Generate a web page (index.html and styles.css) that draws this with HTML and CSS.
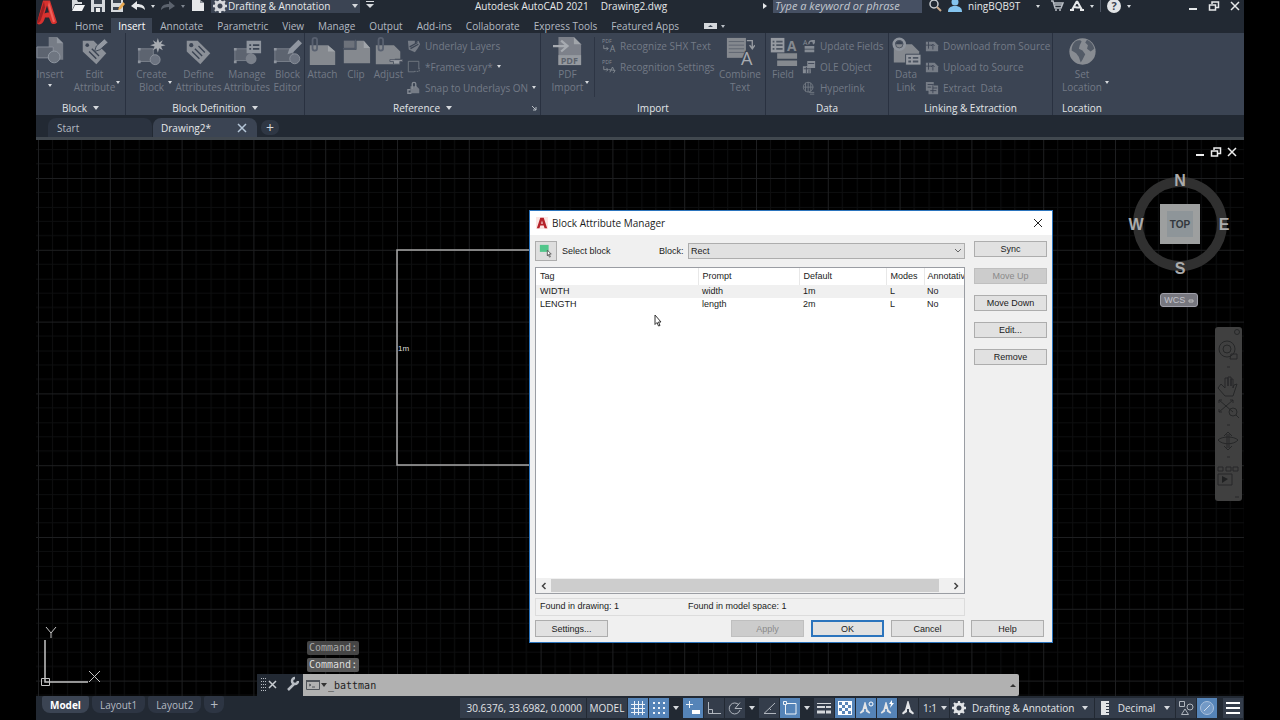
FILE: index.html
```html
<!DOCTYPE html>
<html lang="en">
<head>
<meta charset="utf-8">
<title>Autodesk AutoCAD 2021 - Drawing2.dwg</title>
<link rel="stylesheet" href="styles.css">
</head>
<body>
<svg class="sprites" aria-hidden="true">
  <symbol id="gear" viewBox="0 0 16 16"><path fill="none" stroke="currentColor" stroke-width="3.4" d="M8 3.4a4.6 4.6 0 1 1-.01 0z"/><path stroke="currentColor" stroke-width="2.6" d="M8 0v3M8 13v3M0 8h3M13 8h3M2.3 2.3l2.2 2.2M11.5 11.5l2.2 2.2M2.3 13.7l2.2-2.2M11.5 4.500l2.200-2.200"/></symbol>
  <symbol id="logo" viewBox="0 0 20 24"><path fill="#d8322f" d="M6 0h7l7 22c-2 2-5 2-6 0l-2-5H8c-1 4-3 7-6 7-1 0-2-1-2-2z"/><path fill="#222933" d="M10 5l2 7c-2 0-3 0-4.500 1z"/><path fill="#a01f22" d="M0 22L7 1l1 6-4 12c-1 3-3 4-4 3z"/><path fill="#f0605a" d="M12 1l6 20-2 1-5-17z"/></symbol>
  <symbol id="insert" viewBox="0 0 32 32"><path fill="#767c86" d="M14 0h9l7 7v18H14z"/><path fill="#9298a1" d="M23 0v7h7z"/><path fill="#5d6470" stroke="#8b919b" d="M1 11h18v12H1z"/><circle cx="20" cy="22" r="6.500" fill="#6f7681" stroke="#939aa4"/></symbol>
  <symbol id="tagedit" viewBox="0 0 32 32"><path fill="#8b9098" d="M3 4h12l14 14-11 12L3 16z"/><circle cx="8" cy="9" r="2" fill="#3b4453"/><path stroke="#3b4453" stroke-width="1.500" d="M10 16l8 8M13 13l8 8"/><path fill="#9298a1" stroke="#3b4453" d="M16 16l2-6 9-8 4 4-9 8z"/></symbol>
  <symbol id="tag" viewBox="0 0 32 32"><path fill="#8b9098" d="M3 4h12l14 14-11 12L3 16z"/><circle cx="8" cy="9" r="2.300" fill="#3b4453"/><path stroke="#3b4453" stroke-width="1.500" d="M9 16l8 8M12 13l8 8M16 10l7 7"/></symbol>
  <symbol id="create" viewBox="0 0 32 32"><path fill="#5d6470" stroke="#7d838d" d="M2 13h16v14H2z"/><path fill="#9096a0" d="M1 12h3v3H1zM1 26h3v3H1zM17 26h3v3h-3z"/><circle cx="20" cy="25" r="5.500" fill="#6c7380" stroke="#8c929c"/><path fill="#a7abb1" d="M23 1l1.500 5 4-2.500-2 4 5 1.500-5 1.500 2 4-4-2-1.500 5-1.500-5-4 2 2-4-5-1.500 5-1.500-2-4 4 2.500z"/></symbol>
  <symbol id="manage" viewBox="0 0 32 32"><path fill="#5d6470" stroke="#7d838d" d="M2 13h18v13H2z"/><circle cx="20" cy="24" r="6" fill="#7b818b"/><path fill="#8f959e" d="M1 12h3v3H1zM1 26h3v3H1zM15 4h16v14H15z"/><path stroke="#3b4453" stroke-width="2" d="M18 9h2M18 13h2M22 9h7M22 13h7"/></symbol>
  <symbol id="editor" viewBox="0 0 32 32"><path fill="#5d6470" stroke="#7d838d" d="M2 13h20v14H2z"/><circle cx="24" cy="24" r="5.500" fill="#6c7380" stroke="#8c929c"/><path fill="#9096a0" d="M1 12h3v3H1zM1 26h3v3H1zM16 19l2-6L28 3l4 4-10 10z"/></symbol>
  <symbol id="attach" viewBox="0 0 32 32"><path fill="#85898f" d="M2 9h20l8 7v15H2z"/><path fill="#a1a5aa" d="M22 9v7h8z"/><rect x="5" y="1" width="5" height="14" rx="2.500" fill="none" stroke="#596170" stroke-width="2"/></symbol>
  <symbol id="clip" viewBox="0 0 32 32"><path fill="#85898f" d="M2 14h14V4h8l7 8v17H2z"/><path fill="#6d727b" d="M2 4h12v8H2z"/><path fill="none" stroke="#596170" d="M1 13h14V3"/><path fill="#a1a5aa" d="M24 4v8h7z"/></symbol>
  <symbol id="adjust" viewBox="0 0 32 32"><path fill="#85898f" d="M2 9h20l7 7v8h-6v6H2z"/><rect x="5" y="1" width="5" height="14" rx="2.500" fill="none" stroke="#596170" stroke-width="2"/><path fill="#9a9ea5" stroke="#4d5562" d="M17.500 25h14v2h-3v3h-7v-3h-4z"/></symbol>
  <symbol id="datalink" viewBox="0 0 32 32"><path fill="#85898f" d="M2 8h20l8 8v12H2z"/><circle cx="8" cy="8" r="6" fill="none" stroke="#8f959e" stroke-width="3"/><circle cx="8" cy="8" r="4" fill="none" stroke="#4d5562"/><path fill="#969aa1" stroke="#3b4453" d="M15 19h17v12H15z"/><path stroke="#4d5562" stroke-width="2" d="M18 23h3M18 27h3M23 23h6M23 27h6"/></symbol>
  <symbol id="globe" viewBox="0 0 32 32"><circle cx="16" cy="16" r="14.500" fill="#888c92"/><path fill="#535b67" d="M8 5c3-2 6-2 7 0l-2 4-1 4 4 2 3 4-3 6-2 3-2-6-3-4-5-3c0-4 1-7 4-10zM21 3c4 2 7 5 8 10l-4 3-4-3 1-4-3-3z"/></symbol>
  <symbol id="layers" viewBox="0 0 16 16"><path fill="#767c86" d="M1 2h8v3l4-3 2 4-3 5-3 4-7-3z"/><path stroke="#3b4453" stroke-width="1.500" d="M3 9l9-5M4 11l9-5"/></symbol>
  <symbol id="frame" viewBox="0 0 16 16"><path fill="none" stroke="#747a84" d="M1.500 1.500h12v9M1.500 1.500v12h7"/><path fill="none" stroke="#747a84" stroke-dasharray="2 1" d="M8 13h6v-4"/></symbol>
  <symbol id="snapu" viewBox="0 0 16 16"><path fill="#767c86" d="M4 6h7l3 3v5H4z"/><path fill="none" stroke="#858b94" stroke-width="1.500" d="M6 9V3c0-2 4-2 4 0v4M4 10H1v4h4"/></symbol>
  <symbol id="ole" viewBox="0 0 16 16"><path fill="#858b94" d="M6 1h9v8H6zM1 7h9v8H1z"/><path stroke="#3b4453" d="M7 4h7M2 10h8M5 8v7M8 11v4"/></symbol>
  <symbol id="link" viewBox="0 0 16 16"><circle cx="7" cy="7" r="5.500" fill="none" stroke="#747a84"/><path fill="none" stroke="#747a84" d="M2 7h11M7 1v12M4 2v10M10 2v10M8 13h6M9 15h5"/></symbol>
  <symbol id="sheet" viewBox="0 0 16 16"><path fill="#767c86" d="M1 3h10l4 4v7H1z"/><path fill="none" stroke="#3b4453" d="M4 3v8M1 7h7M9 12V6M7 8l2-2 2 2"/></symbol>
  <symbol id="extract" viewBox="0 0 16 16"><path fill="#767c86" d="M1 1h9v4h5v10H4v-4H1z"/><path stroke="#3b4453" d="M3 4h7M3 7h4M9 8h5M6 11h7M9 5v9"/></symbol>
  <symbol id="cross" viewBox="0 0 12 12"><path fill="none" stroke="currentColor" stroke-width="1.500" d="M2 2l8 8M10 2l-8 8"/></symbol>
  <symbol id="restore" viewBox="0 0 12 12"><path fill="none" stroke="currentColor" stroke-width="1.500" d="M1.500 5h6v5h-6zM4 4V2h6.500v5.500H8"/></symbol>
  <symbol id="minus" viewBox="0 0 12 12"><path stroke="currentColor" stroke-width="2" d="M2 9h8"/></symbol>
  <symbol id="acursor" viewBox="0 0 16 16"><path fill="currentColor" d="M7.500 1h1l2.500 9 3 3-1 1.500-4-2.500V9H7v3l-4 2.500L2 13l3-3z"/></symbol>
</svg>

<div class="app">
  <header class="header">
    <svg class="logo" role="img" aria-label="AutoCAD"><use href="#logo"/></svg>
    <div class="titlebar">
      <div class="quick">
        <button class="qa" aria-label="Open"><svg viewBox="0 0 14 12"><path fill="#d5d8dc" d="M1 0h5l1 2h4v2H4L1 10z"/><path fill="#f2f3f5" d="M4 5h10l-3 6H1z"/></svg></button>
        <button class="qa" aria-label="Save"><svg viewBox="0 0 14 12"><path fill="#d5d8dc" d="M0 0h14v12H0z"/><path fill="#3a424e" d="M3 0h8v4H3zM3 7h8v5H3z"/><path fill="#eee" d="M5 8h4v4H5z"/></svg></button>
        <button class="qa" aria-label="Save As"><svg viewBox="0 0 14 12"><path fill="#d5d8dc" d="M0 0h12v12H0z"/><path fill="#3a424e" d="M2 0h8v3H2zM2 7h6v3H2z"/><path fill="#e8a850" d="M7 10l1-3 4-5 2 2-4 5z"/></svg></button>
        <button class="qa" aria-label="Undo"><svg viewBox="0 0 14 12"><path fill="#e6e8ea" d="M0 6l6-5v3c5 0 8 2 8 6-2-2-4-3-8-3v3z"/></svg></button>
        <i class="tri"></i>
        <button class="qa" aria-label="Redo"><svg viewBox="0 0 14 12"><path fill="#5b626d" d="M14 6L8 1v3c-5 0-8 2-8 6 2-2 4-3 8-3v3z"/></svg></button>
        <i class="tri dim"></i>
        <button class="qa" aria-label="New"><svg viewBox="0 0 14 12"><path fill="#e6e8ea" d="M1 0h8l4 3v8H1z"/><path fill="#8b9098" d="M9 0v3h4z"/></svg></button>
        <label class="workspace"><svg><use href="#gear"/></svg><select aria-label="Workspace"><option>Drafting &amp; Annotation</option></select><i class="tri wide"></i></label>
        <i class="tri bar"></i>
      </div>
      <div class="doctitle"><span>Autodesk AutoCAD 2021</span><span>Drawing2.dwg</span></div>
      <div class="account">
        <i class="tri side"></i>
        <input class="search" type="text" placeholder="Type a keyword or phrase" aria-label="Search">
        <svg class="ic14" viewBox="0 0 14 12"><circle cx="6" cy="4" r="4" fill="none" stroke="#c9cdd2" stroke-width="1.500"/><path stroke="#c9a98a" stroke-width="2" d="M9 7l4 4"/></svg>
        <svg class="ic14 user" viewBox="0 0 14 12"><circle cx="7" cy="2" r="3.500" fill="#84c4ef"/><path fill="#84c4ef" d="M0 12c0-4 2-5 5-6h4c3 1 5 2 5 6z"/></svg>
        <span class="username">ningBQB9T</span>
        <i class="tri"></i>
        <svg class="ic14 cart" viewBox="0 0 14 12"><path fill="none" stroke="#b8bdc4" stroke-width="1.500" d="M1 1h2l2 7h6l2-5H4M5 5h7"/><circle cx="6" cy="10" r="1" fill="#b8bdc4"/><circle cx="10" cy="10" r="1" fill="#b8bdc4"/></svg>
        <svg class="ic14" viewBox="0 0 14 12"><path fill="none" stroke="#e6e8ea" stroke-width="2" d="M7 1L2 10M7 1l5 9M4 7c2 0 4 1 6 0M0 10h4M10 10h4"/></svg>
        <i class="tri"></i>
        <span class="vline"></span>
        <svg class="ic14 help" viewBox="0 0 14 14"><circle cx="7" cy="7" r="7" fill="#e2e4e6"/><text x="7" y="11" font-size="11" font-weight="700" text-anchor="middle" fill="#3b4453">?</text></svg>
        <i class="tri"></i>
      </div>
      <div class="winctl">
        <button aria-label="Minimize"><svg><use href="#minus"/></svg></button>
        <button aria-label="Restore"><svg><use href="#restore"/></svg></button>
        <button aria-label="Close"><svg><use href="#cross"/></svg></button>
      </div>
    </div>
    <nav class="tabs">
      <button>Home</button><button class="on">Insert</button><button>Annotate</button><button>Parametric</button><button>View</button><button>Manage</button><button>Output</button><button>Add-ins</button><button>Collaborate</button><button>Express Tools</button><button>Featured Apps</button>
      <button class="mini" aria-label="Minimize ribbon"><svg viewBox="0 0 22 8"><path fill="#d5d8dc" d="M0 1h13v6H0z"/><path fill="#3b4453" d="M4 5h5L6.500 3z"/><path fill="#b8bdc4" d="M17 3h4l-2 3z"/></svg></button>
    </nav>
  </header>

  <section class="ribbon">
    <div class="panel p-block">
      <div class="tools">
        <button class="big"><svg><use href="#insert"/></svg><span>Insert</span><i class="tri"></i></button>
        <button class="big"><svg><use href="#tagedit"/></svg><span>Edit<br>Attribute</span><i class="tri corner"></i></button>
      </div>
      <h2>Block <i class="tri wide"></i></h2>
    </div>
    <div class="panel p-def">
      <div class="tools">
        <button class="big"><svg><use href="#create"/></svg><span>Create<br>Block</span><i class="tri corner"></i></button>
        <button class="big"><svg><use href="#tag"/></svg><span>Define<br>Attributes</span></button>
        <button class="big"><svg><use href="#manage"/></svg><span>Manage<br>Attributes</span></button>
        <button class="big"><svg><use href="#editor"/></svg><span>Block<br>Editor</span></button>
      </div>
      <h2>Block Definition <i class="tri wide"></i></h2>
    </div>
    <div class="panel p-ref">
      <div class="tools">
        <button class="big"><svg><use href="#attach"/></svg><span>Attach</span></button>
        <button class="big"><svg><use href="#clip"/></svg><span>Clip</span></button>
        <button class="big"><svg><use href="#adjust"/></svg><span>Adjust</span></button>
        <div class="smalls">
          <button><svg><use href="#layers"/></svg>Underlay Layers</button>
          <button><svg><use href="#frame"/></svg>*Frames vary*<i class="tri"></i></button>
          <button><svg><use href="#snapu"/></svg>Snap to Underlays ON<i class="tri"></i></button>
        </div>
      </div>
      <h2>Reference <i class="tri wide"></i><svg class="launcher" viewBox="0 0 6 6"><path fill="none" stroke="#b8bdc4" d="M1 1l4 4M5 2v3H2"/></svg></h2>
    </div>
    <div class="panel p-imp">
      <div class="tools">
        <button class="big ruled"><svg viewBox="0 0 32 32"><path fill="#7d818a" d="M6 0h17l8 8v23H6z"/><path fill="#a1a5aa" d="M23 0v8h8z"/><path fill="none" stroke="#a7abb1" stroke-width="2.500" d="M0 10h14M9 4l7 6-7 6"/><rect x="6" y="20" width="25" height="11" fill="#969aa0"/><text x="18" y="30" font-size="10" font-weight="700" text-anchor="middle" fill="#5d636d">PDF</text></svg><span>PDF<br>Import</span><i class="tri corner"></i></button>
        <div class="smalls">
          <button><svg viewBox="0 0 16 16"><text x="0" y="5" font-size="6" fill="#858b94">PDF</text><path fill="none" stroke="#858b94" d="M2 7v4h5M5 9l2 2-2 2"/><text x="12" y="15" font-size="10" text-anchor="middle" fill="#858b94">A</text></svg>Recognize SHX Text</button>
          <button><svg viewBox="0 0 16 16"><text x="0" y="5" font-size="6" fill="#858b94">PDF</text><path fill="none" stroke="#858b94" d="M2 7v4h5M5 9l2 2-2 2M9 14l3-6 2 4M8 11l7 1-2 3"/></svg>Recognition Settings</button>
        </div>
        <button class="big"><svg viewBox="0 0 32 32"><path fill="#85898f" d="M1 1h21v22H1z"/><path stroke="#5d636e" stroke-width="1" d="M3 5h17M3 9h17M3 13h17M3 17h17"/><path fill="none" stroke="#989ca2" stroke-width="1.500" d="M23 4h6v8M26 9l3 4 3-4"/><text x="23" y="31" font-size="20" text-anchor="middle" stroke="#3b4453" stroke-width="3" paint-order="stroke" fill="#a7abb1">A</text></svg><span>Combine<br>Text</span></button>
      </div>
      <h2>Import</h2>
    </div>
    <div class="panel p-data">
      <div class="tools">
        <button class="big"><svg viewBox="0 0 32 32"><path fill="#969aa1" d="M2 1h15v16H2z"/><path stroke="#4d5562" stroke-width="2" d="M4 5h2M4 9h2M4 13h2M8 5h7M8 9h7M8 13h7"/><path fill="#85898f" d="M9 18h22v6H9zM9 26h22v6H9z"/><text x="25" y="15" font-size="15" font-weight="700" text-anchor="middle" fill="#85898f">A</text></svg><span>Field</span></button>
        <div class="smalls">
          <button><svg viewBox="0 0 16 16"><text x="1" y="7" font-size="8" fill="#858b94">A</text><path fill="none" stroke="#858b94" stroke-width="1.500" d="M13 6c1-5-6-5-5 0M11 2h3v3"/><path fill="#858b94" d="M3 8h11v3H3zM3 12h11v3H3z"/></svg>Update Fields</button>
          <button><svg><use href="#ole"/></svg>OLE Object</button>
          <button><svg><use href="#link"/></svg>Hyperlink</button>
        </div>
      </div>
      <h2>Data</h2>
    </div>
    <div class="panel p-link">
      <div class="tools">
        <button class="big"><svg><use href="#datalink"/></svg><span>Data<br>Link</span></button>
        <div class="smalls">
          <button><svg><use href="#sheet"/></svg>Download from Source</button>
          <button><svg><use href="#sheet"/></svg>Upload to Source</button>
          <button><svg><use href="#extract"/></svg>Extract&nbsp; Data</button>
        </div>
      </div>
      <h2>Linking &amp; Extraction</h2>
    </div>
    <div class="panel p-loc">
      <div class="tools">
        <button class="big"><svg><use href="#globe"/></svg><span>Set<br>Location</span><i class="tri corner"></i></button>
      </div>
      <h2>Location</h2>
    </div>
  </section>

  <nav class="files">
    <button class="file">Start</button>
    <button class="file on">Drawing2*<svg><use href="#cross"/></svg></button>
    <button class="add" aria-label="New drawing">+</button>
  </nav>

  <main class="canvas">
    <svg class="drawing" aria-hidden="true">
      <defs>
        <pattern id="grid" x="2" y="38" width="71.800" height="71.800" patternUnits="userSpaceOnUse">
          <path stroke="#0d0e0f" d="M14.500 0v72M29.500 0v72M43.500 0v72M57.500 0v72M0 14.500h72M0 29.500h72M0 43.500h72M0 57.500h72"/>
          <path stroke="#1e1f21" d="M.5 0v72M0 .5h72"/>
        </pattern>
      </defs>
      <rect width="100%" height="100%" fill="url(#grid)"/>
      <rect x="361" y="110" width="431" height="215" fill="none" stroke="#a8a8a8" stroke-width="1.500"/>
      <text x="362" y="211" font-size="8" fill="#ddd">1m</text>
      <g fill="none" stroke="#c4c4c4"><path stroke-width="1.500" d="M9 500v42h43"/><path d="M5.500 538.500h8v7h-8zM10 487l5 6 5-6M15 493v5M53 531l11 11M64 531l-11 11"/></g>
    </svg>
    <div class="viewctl">
      <button aria-label="Minimize view"><svg><use href="#minus"/></svg></button>
      <button aria-label="Restore view"><svg><use href="#restore"/></svg></button>
      <button aria-label="Close view"><svg><use href="#cross"/></svg></button>
    </div>
    <div class="cube">
      <svg viewBox="0 0 104 112" role="img" aria-label="View cube">
        <circle cx="52" cy="52" r="42" fill="none" stroke="#303030" stroke-width="10"/>
        <rect x="32" y="32" width="40" height="40" fill="#9d9f9f"/><rect x="39" y="39" width="26" height="26" fill="#8e9599"/>
        <text x="52" y="56" class="top">TOP</text>
        <text x="52" y="14">N</text><text x="52" y="102">S</text><text x="8" y="58">W</text><text x="96" y="58">E</text>
      </svg>
      <button class="wcs">WCS <svg viewBox="0 0 6 4"><path fill="none" stroke="#bbb" d="M1 1h4v2H1z"/></svg></button>
    </div>
    <svg class="navbar" viewBox="0 0 27 174" role="img" aria-label="Navigation bar">
      <rect width="27" height="174" rx="3" fill="#404040"/>
      <g fill="none" stroke="#262728"><circle cx="22" cy="5" r="2.500"/><circle cx="12" cy="22" r="8"/><circle cx="12" cy="22" r="4"/><path d="M16 27h6v5h-7zM6 57l-3 4 7 8h8l4-12-3 1-1 3V52h-2v7V50h-3v9V51h-3v10zM4 73l14 12M4 85l14-12M4 76v-3h3M15 73h3v3M4 82v3h3M12 107v14M14 107v14M9 109l4-4 4 4M9 119l4 4 4-4M3 113c4 5 16 5 20 0M3 113c4-4 16-4 20 0M3 140h5v4H3zM11 140h5v4h-5zM18 140h5v4h-5zM3 147h14v11H3zM20 170h4"/><circle cx="18" cy="85" r="4"/><path d="M21 88l3 3M12 40h3M12 98h3M12 130h3"/></g>
      <path fill="#202122" d="M7 149l6 3-6 4z"/>
    </svg>

    <form class="dialog" role="dialog" aria-labelledby="dlg-title">
      <div class="dlg-title">
        <svg viewBox="0 0 14 14"><path fill="#fbe6e4" d="M0 0h14v14H0z"/><path fill="#b5222a" d="M5 1h4l4 12h-3l-1-3H5l-1 3H1zM7 4L6 8h2z"/></svg>
        <span id="dlg-title">Block Attribute Manager</span>
        <button type="button" aria-label="Close dialog"><svg viewBox="0 0 12 12"><path stroke="#222" d="M2 2l8 8M10 2l-8 8"/></svg></button>
      </div>
      <div class="dlg-body">
        <div class="pane">
          <div class="pick">
            <button type="button" id="pick" aria-label="Select block"><svg viewBox="0 0 16 16"><path fill="#52c68b" d="M1 1h10v8H1z"/><path fill="#fff" stroke="#555" d="M9.500 7l4.500 4.500h-2.500l1.500 3-1 .5-1.500-3-1 1.500z"/></svg></button>
            <span class="picklabel">Select block</span>
            <label for="block">Block:</label>
            <span class="combo"><select id="block"><option>Rect</option></select><svg viewBox="0 0 8 6"><path fill="none" stroke="#666" d="M1 1l3 3 3-3"/></svg></span>
          </div>
          <div class="list">
            <table>
              <colgroup><col class="c-tag"><col class="c-prompt"><col class="c-default"><col class="c-modes"><col></colgroup>
              <thead><tr><th>Tag</th><th>Prompt</th><th>Default</th><th>Modes</th><th>Annotative</th></tr></thead>
              <tbody>
                <tr class="sel"><td>WIDTH</td><td>width</td><td>1m</td><td>L</td><td>No</td></tr>
                <tr><td>LENGTH</td><td>length</td><td>2m</td><td>L</td><td>No</td></tr>
              </tbody>
            </table>
            <div class="hscroll">
              <svg viewBox="0 0 8 8"><path fill="none" stroke="#444" stroke-width="1.500" d="M5.500 1l-3 3 3 3"/></svg>
              <div class="thumb"></div>
              <svg viewBox="0 0 8 8"><path fill="none" stroke="#444" stroke-width="1.500" d="M2.500 1l3 3-3 3"/></svg>
            </div>
          </div>
          <div class="found"><span>Found in drawing: 1</span><span>Found in model space: 1</span></div>
        </div>
        <div class="side">
          <button type="button">Sync</button>
          <button type="button" disabled>Move Up</button>
          <button type="button">Move Down</button>
          <button type="button">Edit...</button>
          <button type="button">Remove</button>
        </div>
      </div>
      <div class="foot">
        <button type="button">Settings...</button>
        <button type="button" class="push" disabled>Apply</button>
        <button type="button" class="ok">OK</button>
        <button type="button">Cancel</button>
        <button type="button">Help</button>
      </div>
    </form>
    <svg class="pointer" viewBox="0 0 8 13" aria-hidden="true"><path fill="#fff" stroke="#333" d="M1 1v9.500l2-2 1.500 3.500 1.500-.5L4.500 8H7z"/></svg>

    <div class="cmd">
      <div class="history"><span>Command:</span><span>Command:</span></div>
      <div class="cmdline">
        <div class="cmdtools">
          <svg viewBox="0 0 42 22"><path stroke="#b8bdc4" stroke-dasharray="1 2" d="M4.500 4v14M6.500 4v14M8.500 4v14"/><path stroke="#c9cdd2" stroke-width="1.500" d="M12 7l7 7M19 7l-7 7"/><path fill="none" stroke="#b8bdc4" stroke-width="2.500" d="M31 16l6-6M41 7a3 3 0 1 1-3-3"/></svg>
        </div>
        <svg class="prompt" viewBox="0 0 22 12"><path fill="none" stroke="#50545a" d="M.5 1.500h13v9H.5z"/><path stroke="#50545a" stroke-width="2" d="M0 2h14"/><path fill="none" stroke="#50545a" d="M3 5l2 1-2 1M6 8h3"/><path fill="#333" d="M15 4h6l-3 4z"/></svg>
        <input type="text" value="_battman" aria-label="Command">
        <i class="up"></i>
      </div>
    </div>
  </main>

  <footer class="footer">
    <nav class="layouts">
      <button class="on">Model</button><button>Layout1</button><button>Layout2</button><button class="plus" aria-label="New layout">+</button>
    </nav>
    <div class="status">
      <span class="coords">30.6376, 33.6982, 0.0000</span>
      <button class="model">MODEL</button>
      <button class="st hot" aria-label="Grid"><svg viewBox="0 0 16 16"><path stroke="#eef3f8" d="M4.500 1v14M8.500 1v14M12.500 1v14M1 4.500h14M1 8.500h14M1 12.500h14"/></svg></button>
      <button class="st hot" aria-label="Snap"><svg viewBox="0 0 16 16"><path stroke="#eef3f8" stroke-width="2" stroke-dasharray="2 3" d="M2 3h12M2 8h12M2 13h12"/></svg></button>
      <i class="tri wide drop"></i>
      <button class="st hot" aria-label="Dynamic input"><svg viewBox="0 0 16 16"><path stroke="#eef3f8" d="M4.500 1v7M1 4.500h7"/><path fill="#fff" d="M7 10h8v4H7z"/></svg></button>
      <button class="st" aria-label="Ortho"><svg viewBox="0 0 16 16"><path fill="none" stroke="#b0b6be" d="M2.500 2v11.500H15M2.500 9.500h4v4"/></svg></button>
      <button class="st" aria-label="Polar"><svg viewBox="0 0 16 16"><path fill="none" stroke="#b0b6be" d="M12 5a5.500 5.500 0 1 0 1 5M8 8.500h7M8 8.500l5-6"/></svg></button>
      <i class="tri wide drop"></i>
      <button class="st" aria-label="Isodraft"><svg viewBox="0 0 16 16"><path fill="none" stroke="#b0b6be" d="M14 3L3 13.500h12M8 8l2 2"/></svg></button>
      <button class="st hot" aria-label="Object snap"><svg viewBox="0 0 16 16"><path fill="none" stroke="#eef3f8" d="M5 3.500h9v10.500H3.500V5M1.500 1.500h3v3h-3z"/></svg></button>
      <i class="tri wide drop"></i>
      <button class="st" aria-label="Lineweight"><svg viewBox="0 0 16 16"><path stroke="#d5d8dc" d="M1 3.500h14"/><path stroke="#d5d8dc" stroke-width="2" d="M1 7h8M10 7h5"/><path stroke="#d5d8dc" stroke-width="3" d="M1 12h8M10 12h5"/></svg></button>
      <button class="st hot" aria-label="Transparency"><svg viewBox="0 0 16 16"><path fill="#fff" d="M1 1h14v14H1z"/><path stroke="#5b86b8" stroke-width="3" stroke-dasharray="3 3" d="M2 3.500h12M2 9.500h12"/><path stroke="#5b86b8" stroke-width="3" stroke-dasharray="3 3" d="M5 6.500h9M5 12.500h9"/></svg></button>
      <button class="st hot" aria-label="Annotation visibility"><svg viewBox="0 0 16 16"><use href="#acursor" width="14" height="16"/><circle cx="13" cy="4" r="2" fill="none" stroke="#fff"/></svg></button>
      <button class="st hot" aria-label="Auto scale"><svg viewBox="0 0 16 16"><use href="#acursor" width="14" height="16"/><path fill="#fff" d="M13 0l-3 4h2l-1 4 4-5h-2z"/></svg></button>
      <button class="st" aria-label="Annotation scale"><svg><use href="#acursor"/></svg></button>
      <button class="scale">1:1<i class="tri wide"></i></button>
      <button class="ws"><svg><use href="#gear"/></svg>Drafting &amp; Annotation<i class="tri wide"></i></button>
      <button class="units"><svg viewBox="0 0 8 14"><path fill="#e2e4e6" d="M0 0h8v2H5v1h3v2H5v1h3v2H5v1h3v2H5v1h3v2H0z"/></svg><span>Decimal</span><i class="tri wide"></i></button>
      <button class="st" aria-label="Isolate"><svg viewBox="0 0 16 16"><path fill="none" stroke="#b0b6be" d="M1.500 1.500h5v5h-5zM7 9l3.500 5.500h-7z"/><circle cx="12" cy="7" r="3" fill="none" stroke="#b0b6be"/></svg></button>
      <button class="st hot perf" aria-label="Performance"><svg viewBox="0 0 16 16"><circle cx="8" cy="8" r="6.500" fill="#7299c6" stroke="#a9c0dc"/><path stroke="#d2dfee" d="M5 11l6-6"/></svg></button>
      <button class="st menu" aria-label="Customization"><svg viewBox="0 0 16 16"><path stroke="#fff" stroke-width="2" d="M1 3h14M1 8h14M1 13h14"/></svg></button>
    </div>
  </footer>
</div>
</body>
</html>
```
FILE: styles.css
```css
* { box-sizing: border-box; }
body { margin: 0; background: #000; font: 10px/14px "Open Sans", "Noto Sans", sans-serif; color: #d6d9dd; }
button { font: inherit; color: inherit; background: none; border: 0; padding: 0; margin: 0; white-space: nowrap; }
svg text { font-family: "Open Sans", "Noto Sans", sans-serif; }
.sprites { position: absolute; width: 0; height: 0; }
.app { display: flex; flex-direction: column; height: 100vh; margin: 0 36px; overflow: hidden; background: #222933; }

.tri { flex: none; width: 0; height: 0; border: 2px solid transparent; border-top: 3px solid #d6d9dd; border-bottom: 0; }
.tri.dim { border-top-color: #7d848e; }
.tri.wide { border-width: 4px 3px 0; }
.tri.side { border: 3px solid transparent; border-left: 4px solid #e6e8ea; border-right: 0; }
.tri.bar { border-width: 4px 4px 0; position: relative; }
.tri.bar::before { content: ""; position: absolute; left: -4px; top: -7px; width: 8px; height: 1px; background: #d6d9dd; }

/* title bar and ribbon tabs */
.header { display: grid; grid-template-columns: 32px 1fr; grid-template-rows: 18px 15px; }
.logo { grid-row: 1 / 3; width: 20px; height: 25px; margin-left: 1px; }
.titlebar { display: flex; align-items: flex-start; min-width: 0; }
.quick, .account, .winctl { display: flex; align-items: center; height: 12px; }
.quick { width: 407px; gap: 6px; padding-left: 3px; }
.qa, .qa svg { width: 14px; height: 12px; display: block; }
.workspace { display: flex; align-items: center; width: 149px; height: 14px; background: #3b4453; padding: 0 2px; gap: 1px; }
.workspace svg { width: 14px; height: 14px; flex: none; }
.workspace select { flex: 1; min-width: 0; appearance: none; border: 0; padding: 0; background: none; font: inherit; color: #e6e8ea; }
.doctitle { display: flex; gap: 12px; flex: 1; line-height: 13px; color: #e6e8ea; white-space: nowrap; }
.account { gap: 6px; }
.search { width: 149px; height: 14px; border: 0; padding: 0 2px; background: #465063; font: italic 11px/14px "Open Sans", sans-serif; color: #fff; }
.search::placeholder { color: #c3c8cf; opacity: 1; }
.ic14 { width: 14px; height: 12px; flex: none; }
.help { height: 14px; }
.username { width: 62px; color: #e6e8ea; }
.cart { margin-left: 4px; }
.vline { width: 1px; height: 12px; background: #4d5562; }
.winctl { margin: 0 3px 0 56px; gap: 9px; color: #e6e8ea; }
.winctl button, .winctl svg { display: block; width: 12px; height: 12px; }
.tabs { display: flex; color: #b4bac2; }
.tabs button { padding: 0 7px; }
.tabs .on { background: #3b4453; color: #fff; margin: 0 1px; }
.tabs .mini { padding: 0 18px; }
.mini svg { width: 22px; height: 8px; display: block; }

/* ribbon */
.ribbon { display: flex; flex: none; background: #3b4453; height: 82px; color: #737a86; }
.panel { flex: none; display: flex; flex-direction: column; border-right: 1px solid #293140; }
.p-block { width: 90px; } .p-def { width: 179px; } .p-ref { width: 236px; } .p-imp { width: 225px; }
.p-data { width: 123px; } .p-link { width: 164px; } .p-loc { flex: 1; border: 0; }
.tools { flex: 1; display: grid; padding-top: 4px; }
.p-block .tools { grid-template-columns: 28px 61px; }
.p-def .tools { grid-template-columns: 51px 43px 54px 27px; }
.p-ref .tools { grid-template-columns: 35px 32px 33px minmax(0, 1fr); }
.p-imp .tools { grid-template-columns: 54px minmax(0, 1fr) 50px; }
.p-data .tools, .p-link .tools { grid-template-columns: 34px minmax(0, 1fr); }
.p-loc .tools { grid-template-columns: 58px; }
.panel h2 { position: relative; display: flex; align-items: center; justify-content: center; gap: 6px; height: 14px; margin: 0; font: inherit; color: #e2e4e7; }
.p-loc h2 { width: 58px; }
.big { position: relative; display: flex; flex-direction: column; align-items: center; line-height: 13px; text-align: center; }
.big svg { width: 29px; height: 29px; flex: none; }
.big span { margin-top: 2px; }
.big .tri { margin-top: 3px; }
.big .corner { position: absolute; right: 5px; top: 41px; }
.p-loc .corner { right: 2px; }
.ruled { border-right: 1px solid #2d3544; margin-bottom: 4px; }
.smalls { display: grid; grid-template-rows: repeat(3, 21px); padding-left: 2px; }
.p-imp .smalls { padding-left: 7px; }
.smalls button { display: flex; align-items: center; gap: 4px; height: 17px; }
.smalls svg { width: 14px; height: 14px; flex: none; }
.launcher { position: absolute; right: 3px; top: 4px; width: 6px; height: 6px; }

/* file tabs */
.files { display: flex; flex: none; height: 25px; border-bottom: 3px solid #41484f; padding: 3px 0 0 12px; gap: 1px; }
.file { display: flex; align-items: center; justify-content: space-between; width: 104px; padding: 0 9px; background: #2b3340; border-radius: 8px 8px 0 0; color: #b4bac2; }
.file.on { background: #3b4453; color: #e6e8ea; padding-left: 8px; }
.file svg { width: 12px; height: 12px; color: #b5c6d8; }
.add { margin: 2px 0 2px 3px; width: 18px; background: #2f3744; border-radius: 7px; font-size: 14px; }

/* drawing area */
.canvas { position: relative; flex: 1; min-height: 0; background: #000; overflow: hidden; }
.drawing { display: block; width: 100%; height: 100%; }
.drawing text { font-family: "Liberation Sans", Arial, sans-serif; }
.viewctl { position: absolute; right: 6px; top: 6px; display: flex; gap: 4px; color: #eee; }
.viewctl svg { display: block; width: 12px; height: 12px; }
.cube { position: absolute; right: 12px; top: 32px; width: 104px; }
.cube > svg { display: block; width: 104px; height: 112px; }
.cube text { font: 700 16px "Liberation Sans", Arial, sans-serif; text-anchor: middle; fill: #ababab; }
.cube .top { font-size: 10px; fill: #33383d; }
.wcs { display: block; margin: 9px 0 0 32px; width: 38px; height: 14px; border-radius: 3px; border: 1px solid #a0a0aa; background: #77777f; color: #c4c4cc; font: 9px/11px "Liberation Sans", Arial, sans-serif; }
.wcs svg { width: 6px; height: 4px; }
.navbar { position: absolute; right: 2px; top: 187px; width: 27px; height: 174px; }
.pointer { position: absolute; left: 618px; top: 174px; width: 8px; height: 13px; }

/* block attribute manager */
.dialog { position: absolute; left: 493px; top: 70px; width: 524px; border: 1px solid #2b74bd; background: #f0f0f0; color: #1b1b1b; font: 9px/13px "Liberation Sans", Arial, sans-serif; }
.dlg-title { display: flex; align-items: center; gap: 4px; height: 24px; padding: 0 8px 0 6px; background: #fff; font: 10px/14px "Open Sans", sans-serif; }
.dlg-title > svg { width: 12px; height: 12px; }
.dlg-title button { margin-left: auto; }
.dlg-title button svg { display: block; width: 12px; height: 12px; }
.dlg-body { display: grid; grid-template-columns: 1fr 73px; gap: 9px; padding: 6px 5px 0 5px; }
.pick { display: flex; align-items: center; height: 20px; margin-bottom: 6px; }
.pick > button { width: 22px; height: 20px; padding: 2px; border: 1px solid #adadad; background: #dedede; }
.pick > button svg { display: block; width: 16px; height: 14px; }
.picklabel { width: 97px; margin-left: 5px; }
.pick label { width: 29px; }
.combo { position: relative; flex: 1; height: 16px; }
.combo select { display: block; width: 100%; height: 16px; appearance: none; border: 1px solid #adadad; border-radius: 0; background: #e1e1e1; padding: 0 2px; font: inherit; color: inherit; }
.combo svg { position: absolute; right: 3px; top: 5px; width: 8px; height: 6px; }
.list { display: flex; flex-direction: column; height: 327px; border: 1px solid #9a9da3; background: #fff; overflow: hidden; }
.list table { width: 100%; table-layout: fixed; border-collapse: collapse; }
.list th, .list td { height: 13px; padding: 0 0 0 4px; text-align: left; font-weight: 400; overflow: hidden; white-space: nowrap; }
.list th { height: 17px; border-right: 1px solid #e8e8e8; }
.list th:last-child { border: 0; padding-left: 3px; }
.list td:last-child { padding-left: 3px; }
.sel { background: #f0f0f0; }
.c-tag { width: 162px; } .c-prompt { width: 101px; } .c-default { width: 87px; } .c-modes { width: 38px; }
.hscroll { display: flex; align-items: center; height: 15px; margin-top: auto; padding: 1px 4px; background: #f0f0f0; }
.hscroll svg { width: 8px; height: 8px; flex: none; }
.thumb { flex: 1; height: 13px; margin: 0 13px 0 3px; background: #cdcdcd; }
.found { display: flex; height: 18px; margin: 4px 0 0; padding: 1px 4px; border: 1px solid #dcdcdc; }
.found span:first-child { width: 148px; }
.side { display: flex; flex-direction: column; gap: 11px; }
.side button, .foot button { height: 16px; border: 1px solid #adadad; background: #e1e1e1; line-height: 14px; }
.side button:disabled, .foot button:disabled { background: #cccccc; border-color: #bfbfbf; color: #8a8a8a; }
.foot { display: flex; gap: 7px; padding: 4px 8px 5px 5px; }
.foot button { width: 73px; height: 17px; }
.foot .push { margin-left: auto; }
.foot .ok { border: 2px solid #2b74bd; line-height: 12px; }

/* command line */
.cmd { position: absolute; left: 221px; right: 225px; bottom: 0; font: 11px/14px "DejaVu Sans Mono", monospace; }
.history { display: flex; flex-direction: column; align-items: flex-start; gap: 3px; margin: 0 0 2px 50px; }
.history span { padding: 0 2px; height: 14px; border-radius: 2px; background: #454545; color: #a8a8a8; font-size: 10px; }
.history span:last-child { background: #585858; color: #ddd; }
.cmdline { display: flex; align-items: center; height: 22px; background: #b1b1b1; border-radius: 2px; }
.cmdtools { width: 46px; height: 22px; background: #222933; }
.cmdtools svg { display: block; width: 42px; height: 22px; }
.prompt { width: 22px; height: 12px; margin-left: 3px; flex: none; }
.cmdline input { flex: 1; min-width: 0; border: 0; padding: 1px 0 0; background: none; font: 10px/14px "DejaVu Sans Mono", monospace; color: #222; }
.up { margin-right: 3px; border: 3px solid transparent; border-top: 0; border-bottom: 3px solid #333; }

/* layout tabs and status bar */
.footer { display: flex; flex: none; justify-content: space-between; height: 24px; }
.layouts { display: flex; gap: 3px; padding-left: 6px; }
.layouts button { height: 17px; padding: 0 8px; background: #2d3543; border-radius: 2px 2px 8px 8px; color: #b4bac2; }
.layouts .on { background: #3b4453; color: #fff; font-weight: 700; }
.layouts .plus { width: 20px; padding: 0; font-size: 14px; }
.status { display: flex; align-items: center; gap: 1px; height: 21px; margin-top: 1px; padding-right: 1px; color: #e2e4e7; }
.status > * { height: 20px; background-color: #343d4b; }
.status .coords { width: 126px; padding: 0 4px; text-align: right; line-height: 21px; white-space: nowrap; }
.status .model { width: 40px; }
.st { display: grid; place-items: center; width: 20px; }
.st svg { width: 16px; height: 16px; }
.status .hot { background-color: #5584b8; }
.status .drop { height: 4px; margin: 0 3px; background: none; }
.scale, .ws, .units { display: flex; align-items: center; gap: 4px; }
.scale { width: 30px; padding-left: 4px; }
.ws { width: 144px; padding: 0 4px 0 2px; gap: 6px; }
.ws svg { width: 14px; height: 14px; flex: none; }
.ws .tri { margin-left: auto; margin-right: 2px; }
.units { width: 80px; padding: 0 5px 0 6px; justify-content: space-between; }
.units svg { width: 8px; height: 14px; }
.status .perf { margin-right: 5px; }
```
